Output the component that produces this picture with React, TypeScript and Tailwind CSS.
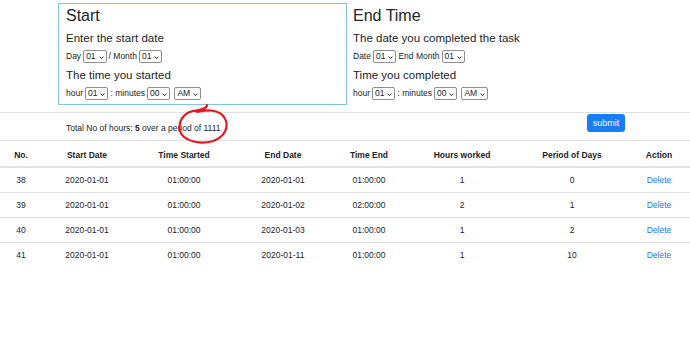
import React from 'react'

const font = { fontFamily: '"Liberation Sans", Arial, sans-serif' }

function Sel({ value }: { value: string }): JSX.Element {
  return (
    <span className="relative inline-flex items-center h-[13px] border border-[#8f8f8f] rounded-[2px] bg-white pl-[2px] pr-[10px] text-[8.5px] leading-none mx-[2px]">
      {value}
      <svg className="absolute right-[2px] top-[4.5px] w-[5px] h-[3.5px]" viewBox="0 0 6 4" fill="none" stroke="#222" strokeWidth={1.2}>
        <path d="M0.6 0.6 L3 3 L5.4 0.6" />
      </svg>
    </span>
  )
}

const rows = [
  { no: 38, sd: '2020-01-01', ts: '01:00:00', ed: '2020-01-01', te: '01:00:00', h: 1, p: 0 },
  { no: 39, sd: '2020-01-01', ts: '01:00:00', ed: '2020-01-02', te: '02:00:00', h: 2, p: 1 },
  { no: 40, sd: '2020-01-01', ts: '01:00:00', ed: '2020-01-03', te: '01:00:00', h: 1, p: 2 },
  { no: 41, sd: '2020-01-01', ts: '01:00:00', ed: '2020-01-11', te: '01:00:00', h: 1, p: 10 },
]

const widths = ['w-[42px]', 'w-[90px]', 'w-[104px]', 'w-[94px]', 'w-[78px]', 'w-[108px]', 'w-[112px]', 'w-[62px]']

export default function App(): JSX.Element {
  return (
    <div className="relative w-[690px] h-[355px] bg-white text-[#212529] overflow-hidden" style={font}>
      {/* Form */}
      <div className="flex pt-[3px]">
        <div className="ml-[58px] w-[289px] h-[102px] border border-[#7fc6d8] px-[7px]">
          <h1 className="text-[16px] leading-[21px] mt-[1px]">Start</h1>
          <h2 className="text-[11.5px] leading-[15px] mt-[5px]">Enter the start date</h2>
          <div className="flex items-center text-[8.5px] mt-[4px] h-[13px]">
            Day <Sel value="01" /> / Month <Sel value="01" />
          </div>
          <h2 className="text-[11.5px] leading-[15px] mt-[5px]">The time you started</h2>
          <div className="flex items-center text-[8.5px] mt-[4px] h-[13px]">
            hour <Sel value="01" /> : minutes <Sel value="00" /> <Sel value="AM" />
          </div>
        </div>
        <div className="ml-[6px] pt-[2px]">
          <h1 className="text-[16px] leading-[21px]">End Time</h1>
          <h2 className="text-[11.5px] leading-[15px] mt-[5px]">The date you completed the task</h2>
          <div className="flex items-center text-[8.5px] mt-[4px] h-[13px]">
            Date <Sel value="01" /> End Month <Sel value="01" />
          </div>
          <h2 className="text-[11.5px] leading-[15px] mt-[5px]">Time you completed</h2>
          <div className="flex items-center text-[8.5px] mt-[4px] h-[13px]">
            hour <Sel value="01" /> : minutes <Sel value="00" /> <Sel value="AM" />
          </div>
        </div>
      </div>

      {/* Totals row */}
      <div className="mt-[7px] h-[29px] border-t border-b border-[#dee2e6] flex items-start text-[8.5px]">
        <span className="ml-[66px] mt-[9px]">
          Total No of hours: <b>5</b> over a period of 1111
        </span>
        <button className="ml-auto mr-[65px] mt-[1px] h-[18px] w-[38px] rounded-[3px] bg-[#1a7cf7] text-white text-[9px] font-medium leading-none">
          submit
        </button>
      </div>

      {/* Table */}
      <table className="w-[690px] table-fixed text-[8.5px] border-collapse">
        <colgroup>
          {widths.map((w, i) => (
            <col key={i} className={w} />
          ))}
        </colgroup>
        <thead>
          <tr className="h-[26px] border-b-2 border-[#dee2e6]">
            {['No.', 'Start Date', 'Time Started', 'End Date', 'Time End', 'Hours worked', 'Period of Days', 'Action'].map((h) => (
              <th key={h} className="font-bold text-center p-0 pt-[3px]">{h}</th>
            ))}
          </tr>
        </thead>
        <tbody>
          {rows.map((r) => (
            <tr key={r.no} className="h-[25px] border-b border-[#dee2e6] last:border-b-0 text-center">
              <td className="pt-[1px]">{r.no}</td>
              <td className="pt-[1px]">{r.sd}</td>
              <td className="pt-[1px]">{r.ts}</td>
              <td className="pt-[1px]">{r.ed}</td>
              <td className="pt-[1px]">{r.te}</td>
              <td className="pt-[1px]">{r.h}</td>
              <td className="pt-[1px]">{r.p}</td>
              <td className="pt-[1px] text-[#1a7cf7]">Delete</td>
            </tr>
          ))}
        </tbody>
      </table>

      {/* Red hand-drawn circle */}
      <svg className="absolute left-[170px] top-[100px] w-[70px] h-[50px]" viewBox="170 100 70 50" fill="none">
        <path
          d="M207 105 C207 109, 200 110, 193 111 C183 113, 178 122, 180 131 C183 141, 200 145, 213 141 C225 137, 230 126, 224 117 C219 110, 208 109, 197 112"
          stroke="#e8161c"
          strokeWidth={2.2}
          strokeLinecap="round"
        />
      </svg>
    </div>
  )
}
